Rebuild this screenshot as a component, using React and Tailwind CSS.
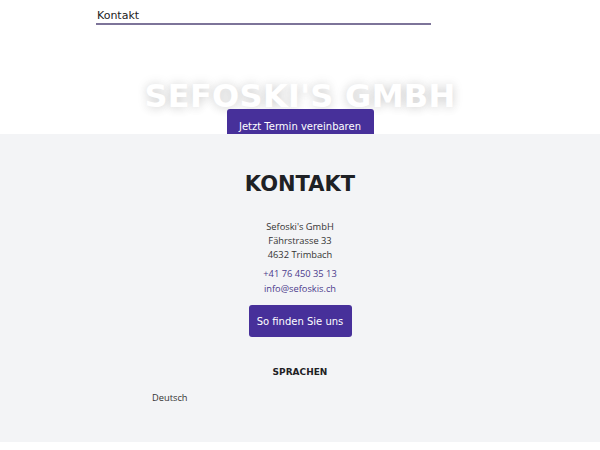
const heading = { fontFamily: '"DejaVu Sans", "Open Sans", sans-serif' }
const body = { fontFamily: '"Open Sans", "Noto Sans", sans-serif' }

export default function App() {
  return (
    <div className="w-[600px] bg-white" style={body}>
      {/* Hero */}
      <div className="h-[134px] overflow-hidden flex flex-col">
        <div className="ml-[96px] w-[335px] pt-[8px]">
          <a href="#" className="block text-[11px] leading-[16px] text-[#222] pl-[1px]" style={heading}>
            Kontakt
          </a>
          <div className="h-[2px] bg-[#7d7499] mt-[-1px]" />
        </div>
        <h1
          className="mt-[53px] text-center text-[32px] leading-[36px] font-bold text-white tracking-[0.3px]"
          style={{ ...heading, textShadow: '0 0 12px rgba(0,0,0,0.14), 0 2px 10px rgba(0,0,0,0.08)' }}
        >
          SEFOSKI'S GMBH
        </h1>
        <div className="flex justify-center mt-[-5px]">
          <a
            href="#"
            className="bg-[#47309a] text-white text-[10px] rounded-[3px] w-[147px] h-[30px] flex items-center justify-center pt-[4px]"
            style={heading}
          >
            Jetzt Termin vereinbaren
          </a>
        </div>
      </div>

      {/* Kontakt */}
      <section className="bg-[#f3f4f6] h-[308px] flex flex-col items-center">
        <h2 className="mt-[37px] text-[21px] leading-[26px] font-bold text-[#1e2125]" style={heading}>
          KONTAKT
        </h2>
        <div className="mt-[23px] text-center text-[9.3px] leading-[14px] text-[#333]">
          <p>Sefoski's GmbH</p>
          <p>Fährstrasse 33</p>
          <p>4632 Trimbach</p>
        </div>
        <div className="mt-[4px] text-center text-[9.3px] leading-[15px] text-[#4b3a8c]">
          <p>+41 76 450 35 13</p>
          <p>info@sefoskis.ch</p>
        </div>
        <a
          href="#"
          className="mt-[9px] bg-[#47309a] text-white text-[10px] rounded-[3px] w-[103px] h-[32px] flex items-center justify-center"
          style={heading}
        >
          So finden Sie uns
        </a>
        <h3 className="mt-[28px] text-[9px] leading-[14px] font-bold text-[#1e2125]" style={heading}>
          SPRACHEN
        </h3>
        <div className="self-start ml-[152px] mt-[12px] text-[9.3px] leading-[14px] text-[#333]">Deutsch</div>
      </section>
      <div className="h-[8px] bg-white" />
    </div>
  )
}
